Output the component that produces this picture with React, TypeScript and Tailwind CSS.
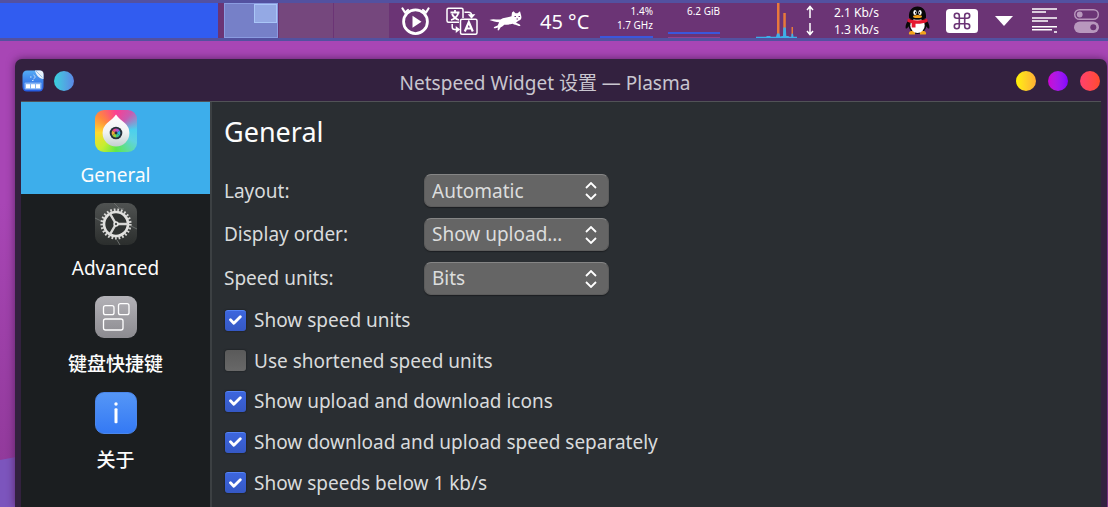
import React, { useState } from "react";

const font =
  "font-['Noto_Sans','Noto_Sans_CJK_SC',sans-serif]";

function Pager() {
  return (
    <div className="flex h-[35px] shrink-0 gap-px" aria-label="Virtual desktops">
      <button aria-label="Desktop 1" className="flex w-[54px] justify-end border border-[#8a9be0] bg-[#7680c8]">
        <span className="h-[19px] w-[23px] border border-[#a9c6f7] bg-[#94a9e4]" />
      </button>
      <button aria-label="Desktop 2" className="w-[54px] bg-[#75477d]" />
      <button aria-label="Desktop 3" className="w-[55px] bg-[#75477d]" />
    </div>
  );
}

function TimerIcon() {
  return (
    <svg width="29" height="29" viewBox="0 0 29 29" fill="none" stroke="#fff">
      <circle cx="14.5" cy="15.7" r="11.900" strokeWidth="2.800" />
      <path d="M1.500 2.500l2.500 4 3-2.500M27.500 2.500l-2.500 4-3-2.500" strokeWidth="2.200" strokeLinecap="round" strokeLinejoin="round" />
      <path d="M11.500 9.700v12l9-6z" fill="#fff" stroke="none" />
    </svg>
  );
}

function TranslateIcon() {
  return (
    <svg width="32" height="28" viewBox="0 0 32 28" fill="none" stroke="#fff" strokeWidth="1.500">
      <path d="M13 15.200H2.500a1.500 1.500 0 0 1-1.500-1.500v-11a1.500 1.500 0 0 1 1.500-1.500h13a1.500 1.500 0 0 1 1.500 1.500V11" />
      <rect x="14.500" y="12.200" width="16.500" height="15" rx="1.500" />
      <path d="M9 3v2.500M4.500 5.500h9M6 7c1.500 3 4 5 7 6M12.200 6.500C11 10 8.500 12 5 13" strokeWidth="1.800" />
      <path d="M18.800 24.500l4-9.500 4 9.500M20.200 21.500h5.200" strokeWidth="2.200" />
      <path d="M18.500 5.200h4a3 3 0 0 1 3 3V9" />
      <path d="M6.200 17v3a2.500 2.500 0 0 0 2.500 2.500h3.500" />
      <path d="M23.300 8l2.200 2.500L27.700 8zM10.500 20.500l2.500 2-2.500 2z" fill="#fff" />
    </svg>
  );
}

function CatIcon() {
  return (
    <svg width="33" height="20" viewBox="0 0 33 20">
      <path
        d="M.5 9C4 7.500 8 9 11.500 8.500c3.500-2.200 7.500-1.700 11-3.200L23 1.500 24.500.3l2 2h2L31 .3l1 3.700c1 2.700.3 5.200-2.500 5.800-1 .9-1.800 1.300-2.500 2 1.500.7 3.200.9 4.500 2.600-.5.9-1.500.8-2.300.4-1.700-.8-3.900-.9-5.500-2-3 1-6 .8-8.500 1-1.300 1.700-2.700 2-3.700 2.700-.8 1.100-1 2.700-2.200 3-1 .1-.8-1.500-.1-2.900-1.700.6-4.500 1.200-4.500.3.1-1.100 2.700-1.400 3.900-2.300.6-1.200.9-2.200 1.500-3.400C7 11 3.500 10 .5 9z"
        fill="#fff"
      />
      <path d="M25.500 5.500H27M29.500 5.500H31M27.500 8h1.500" stroke="#6b3475" strokeWidth="1" />
    </svg>
  );
}

function NetGraph() {
  return (
    <svg width="41" height="35" viewBox="0 0 41 35">
      <path d="M21 0h2.500v35H21zM27.300 10H29.800v25h-2.500zM35.500 24H37v11h-1.500z" fill="#e8793b" />
      <path
        d="M0 33.800h10l1-.9h3l1 .8h5L21 30.500h2.500l.5 3 3-.5.3-8.500h2.500l.5 8.500h2l1 .8h2l.2-3H37l.5 3H41V35H0z"
        fill="#3daee9"
      />
    </svg>
  );
}

function PenguinIcon() {
  return (
    <svg width="25" height="29" viewBox="0 0 25 29">
      <path d="M4 13C2 16 .2 19 .6 22c.4 1.500 2 0 2.900-1.500h18c.9 1.500 2.500 3 2.900 1.500.4-3-1.400-6-3.400-9z" fill="#080808" />
      <ellipse cx="12.500" cy="19" rx="9" ry="9" fill="#0b0b0b" />
      <path d="M4 27c0-2 3-2.500 6-2v3.500H5.500C4.300 28.500 3.500 28 4 27zM21 27c0-2-3-2.500-6-2v3.500h4.500c1.200 0 2-.5 1.500-1.500z" fill="#f2a31b" />
      <ellipse cx="12.500" cy="19.500" rx="7.200" ry="7.500" fill="#fff" />
      <path d="M4 11.500C3.500 4.500 7 .5 12.500.5S21.500 4.500 21 11.500c0 3-17 3-17 0z" fill="#080808" />
      <ellipse cx="10" cy="6.500" rx="1.700" ry="2.500" fill="#fff" />
      <ellipse cx="15" cy="6.500" rx="1.700" ry="2.500" fill="#fff" />
      <path d="M10.600 5.800v1.600M14.400 5.800v1.600" stroke="#000" strokeWidth="1.100" />
      <ellipse cx="12.500" cy="10.500" rx="4.500" ry="1.500" fill="#f2a31b" />
      <path d="M2.800 12.500c5.500 2.600 14 2.600 19.400 0l.4 3.300c-3.600 1.700-8 2.200-12.100 2v3.700H6.700v-4.300c-1.700-.3-3-.8-4.300-1.400z" fill="#e5182f" />
    </svg>
  );
}

function CommandIcon() {
  return (
    <svg width="32" height="24" viewBox="0 0 32 24" fill="none">
      <rect width="32" height="24" rx="3.500" fill="#fff" />
      <path
        d="M13.300 9.300h5.400v5.400h-5.400zM13.300 9.300h-2.500A2.500 2.500 0 1 1 13.300 6.800zM18.700 9.300V6.800A2.500 2.500 0 1 1 21.200 9.300zM13.300 14.700v2.500A2.500 2.500 0 1 1 10.800 14.700zM18.700 14.700h2.500a2.500 2.500 0 1 1-2.500 2.500z"
        stroke="#6b3475"
        strokeWidth="1.600"
      />
    </svg>
  );
}

function ListIcon() {
  return (
    <svg width="25" height="25" viewBox="0 0 25 25" fill="none" stroke="#fff" strokeWidth="1.500">
      <path d="M0 1h25M0 4h14M0 10h25M0 13h16M0 18.700h25M0 21.700h20M22 24h3" />
    </svg>
  );
}

function TogglesIcon() {
  return (
    <svg width="25" height="24" viewBox="0 0 25 24" fill="none">
      <rect x=".7" y=".7" width="23.600" height="9.600" rx="4.800" stroke="#b897bd" strokeWidth="1.400" />
      <circle cx="5.700" cy="5.500" r="2.900" fill="#b897bd" />
      <rect y="12.500" width="25" height="11.500" rx="5.750" fill="#b897bd" />
      <circle cx="19.300" cy="18.200" r="3" fill="#6b3475" />
    </svg>
  );
}

function Panel() {
  return (
    <header className="flex h-[41px] shrink-0 items-center overflow-hidden border-y-[3px] border-[#5351a0] bg-[#6b3475] pr-[9px] text-white">
      <div className="mr-[6px] h-[35px] min-w-0 flex-1 bg-[#315cf0]" />
      <Pager />
      <div className="ml-3 flex shrink-0 items-center">
        <TimerIcon />
      </div>
      <div className="ml-4 shrink-0">
        <TranslateIcon />
      </div>
      <div className="ml-[11px] shrink-0">
        <CatIcon />
      </div>
      <span className="ml-[18px] w-[48px] shrink-0 pt-[2px] text-[20px] leading-[35px] whitespace-nowrap">45 °C</span>
      <div className="ml-3 flex h-[35px] w-[53px] shrink-0 flex-col border-b-2 border-[#3a57dc] pt-px text-right text-[10px] leading-[14px]">
        <span>1.4%</span>
        <span>1.7 GHz</span>
      </div>
      <div className="ml-[15px] flex h-[35px] w-[52px] shrink-0 flex-col justify-between pt-px text-right text-[10px] leading-[14px]">
        <span>6.2 GiB</span>
        <span className="h-[6px] border-t-2 border-b border-t-[#3a57dc] border-b-[#93408f]" />
      </div>
      <div className="ml-9 shrink-0">
        <NetGraph />
      </div>
      <svg className="ml-[9px] shrink-0" width="8" height="31" viewBox="0 0 8 31" fill="none" stroke="#fff" strokeWidth="1.500">
        <path d="M4 13V2M1 5l3-3.500L7 5M4 18v11M1 26l3 3.500L7 26" />
      </svg>
      <div className="ml-[10px] flex w-[55px] shrink-0 flex-col text-right text-[12px] leading-[17px] whitespace-nowrap">
        <span>2.1 Kb/s</span>
        <span>1.3 Kb/s</span>
      </div>
      <div className="ml-[26px] shrink-0">
        <PenguinIcon />
      </div>
      <div className="ml-4 shrink-0">
        <CommandIcon />
      </div>
      <svg className="ml-[17px] shrink-0" width="18" height="10" viewBox="0 0 18 10">
        <path d="M0 0h18L9 10z" fill="#fff" />
      </svg>
      <div className="ml-[19px] shrink-0">
        <ListIcon />
      </div>
      <div className="ml-[17px] shrink-0">
        <TogglesIcon />
      </div>
    </header>
  );
}

function AppIcon() {
  return (
    <svg width="22" height="22" viewBox="0 0 22 22">
      <defs>
        <linearGradient id="app" x1="0" y1="0" x2="0" y2="1">
          <stop offset="0" stopColor="#55acf5" />
          <stop offset="1" stopColor="#2459e0" />
        </linearGradient>
      </defs>
      <rect x=".5" y=".5" width="21" height="21" rx="4.500" fill="url(#app)" />
      <path d="M13 .5h5a3.500 3.500 0 0 1 3.500 3.500v5c-4-.5-7.500-3.500-8.500-8.500z" fill="#e8f1fb" />
      <path d="M14 1l6.500 6.500" stroke="#8bb6e0" strokeWidth=".8" />
      <path d="M11.500 5c2 .8 2 3 0 4M8 7h1.500M10 10.500h1.500" stroke="#c6e2fb" strokeWidth="1" fill="none" />
      <rect x="2.500" y="12.500" width="17" height="7" rx="1" fill="#86b4f3" />
      <path d="M4 14.200h4v4H4zM9 14.200h4v4H9zM14 14.200h4v4h-4z" fill="#fff" />
    </svg>
  );
}

function GeneralIcon() {
  return (
    <div className="flex size-[42px] items-center justify-center rounded-[9px] bg-[conic-gradient(#fb3f92,#c85bb0_40deg,#4ad0ee_85deg,#5fd3e0_120deg,#5fe84a_180deg,#c5ee30_220deg,#ffd92f_265deg,#ff8a3c_310deg,#fb3f92)]">
      <svg width="42" height="42" viewBox="0 0 42 42">
        <defs>
          <linearGradient id="drop" x1="0" y1="0" x2="0" y2="1">
            <stop offset="0" stopColor="#fff" />
            <stop offset=".55" stopColor="#f1f3f3" />
            <stop offset="1" stopColor="#c3cfd0" />
          </linearGradient>
        </defs>
        <path d="M21 4.500c2 3.300 5.500 5.700 9 8.700a13.400 13.400 0 1 1-18 0c3.500-3 7-5.400 9-8.700z" fill="url(#drop)" />
        <circle cx="21" cy="23" r="6.300" fill="#27323c" />
        <path d="M21 23l-3.800-2.200A4.400 4.400 0 0 1 21 18.600z" fill="#e94b8e" />
        <path d="M21 23v-4.400a4.400 4.400 0 0 1 3.800 2.200z" fill="#a75bd0" />
        <path d="M21 23l3.800-2.200a4.400 4.400 0 0 1 0 4.400z" fill="#31b6df" />
        <path d="M21 23l3.800 2.200a4.400 4.400 0 0 1-3.800 2.200z" fill="#3fc48a" />
        <path d="M21 23v4.400a4.400 4.400 0 0 1-3.800-2.200z" fill="#9ccf35" />
        <path d="M21 23l-3.800 2.200a4.400 4.400 0 0 1 0-4.400z" fill="#eea93a" />
        <circle cx="21" cy="23" r="1.400" fill="#27323c" />
      </svg>
    </div>
  );
}

function AdvancedIcon() {
  return (
    <div className="size-[42px] rounded-[9px] bg-linear-to-b from-[#505352] to-[#2b2e2d]">
      <svg width="42" height="42" viewBox="0 0 42 42" fill="none">
        <path d="M19 0l5 5 5 1M0 15l6 3M36 23l6 3M22 37l3 5" stroke="#6a6d6c" strokeWidth="1" />
        <circle cx="21" cy="21" r="11" fill="#2f3231" />
        <circle cx="21" cy="21" r="14.300" stroke="#d6d6d4" strokeWidth="2.600" strokeDasharray="1.700 1.895" />
        <circle cx="21" cy="21" r="12" stroke="#e0e0de" strokeWidth="2.600" />
        <path d="M21 21h12M21 21l-6-10.400M21 21l-6 10.400" stroke="#d6d6d4" strokeWidth="2.400" />
        <circle cx="21" cy="21" r="2.700" fill="#e8e8e6" />
        <circle cx="21" cy="21" r="1.200" fill="#4a4d4c" />
      </svg>
    </div>
  );
}

function ShortcutsIcon() {
  return (
    <div className="size-[42px] rounded-[9px] bg-linear-to-b from-[#b3b2b7] to-[#8c8b90]">
      <svg width="42" height="42" viewBox="0 0 42 42" fill="none" stroke="#fff" strokeWidth="1.300">
        <rect x="8.500" y="9.700" width="10.500" height="9" rx="2" />
        <rect x="23.500" y="7.700" width="10.500" height="11" rx="2" />
        <rect x="8.500" y="23" width="19.500" height="11" rx="2" />
      </svg>
    </div>
  );
}

function InfoIcon() {
  return (
    <div className="size-[42px] rounded-[9px] border border-[#4a86ea] bg-linear-to-b from-[#5596f6] to-[#3479f4]">
      <svg width="40" height="40" viewBox="0 0 40 40">
        <circle cx="20" cy="11" r="1.700" fill="#fff" />
        <rect x="18.500" y="15.300" width="3" height="15" rx="1" fill="#fff" />
      </svg>
    </div>
  );
}

const pages = [
  { label: "General", icon: GeneralIcon, cjk: false },
  { label: "Advanced", icon: AdvancedIcon, cjk: false },
  { label: "键盘快捷键", icon: ShortcutsIcon, cjk: true },
  { label: "关于", icon: InfoIcon, cjk: true },
];

function Sidebar() {
  const [active, setActive] = useState("General");
  return (
    <nav className="flex w-[191px] shrink-0 flex-col gap-px border-r-2 border-[#3c4043] bg-[#1b1e20]">
      {pages.map(({ label, icon: Icon, cjk }) => (
        <button
          key={label}
          onClick={() => setActive(label)}
          className={
            "flex flex-col items-center gap-2 pt-2 text-[19px] text-[#fcfcfc] " +
            (cjk ? "leading-[37px] font-medium " : "pb-1 leading-[30px] ") +
            (active === label ? "bg-[#3daeeb]" : "")
          }
        >
          <Icon />
          <span>{label}</span>
        </button>
      ))}
    </nav>
  );
}

function SelectRow({ id, label, options }: { id: string; label: string; options: string[] }) {
  return (
    <div className="flex items-center">
      <label htmlFor={id} className="w-[200px] shrink-0">
        {label}
      </label>
      <div className="relative">
        <select
          id={id}
          className="block h-[33px] w-[185px] appearance-none rounded-[7px] border border-[#5c5c5c] border-t-[#858585] bg-[#656565] pr-8 pl-[7px] text-[19px] leading-[28px] text-[#dcdddd] shadow-[0_1px_1px_#1c1f22]"
        >
          {options.map((o) => (
            <option key={o}>{o}</option>
          ))}
        </select>
        <svg
          className="pointer-events-none absolute top-2 right-3"
          width="12"
          height="18"
          viewBox="0 0 12 18"
          fill="none"
          stroke="#fff"
          strokeWidth="1.800"
        >
          <path d="M1 6l5-5 5 5M1 12l5 5 5-5" />
        </svg>
      </div>
    </div>
  );
}

function CheckRow({ label, initial }: { label: string; initial: boolean }) {
  const [on, setOn] = useState(initial);
  return (
    <label className="flex items-center gap-2">
      <span className="grid shrink-0">
        <input
          type="checkbox"
          checked={on}
          onChange={() => setOn(!on)}
          className="col-start-1 row-start-1 size-[21px] appearance-none rounded-[3px] bg-linear-to-b from-[#5a5a5a] to-[#686868] shadow-[0_0_1px_1px_#23272a] checked:border-t checked:border-[#5684f5] checked:from-[#3d66dd] checked:to-[#3558c4]"
        />
        {on && (
          <svg
            className="pointer-events-none col-start-1 row-start-1 place-self-center"
            width="13"
            height="10"
            viewBox="0 0 13 10"
            fill="none"
            stroke="#fff"
            strokeWidth="2.800"
            strokeLinecap="round"
            strokeLinejoin="round"
          >
            <path d="M1.500 4.800l3.300 3.500 6.500-6.500" />
          </svg>
        )}
      </span>
      <span>{label}</span>
    </label>
  );
}

function Settings() {
  return (
    <main className="min-w-0 flex-1 px-3 text-[19px] leading-[28px] text-[#d9dbdc]">
      <h1 className="pt-[10px] pb-[17px] text-[27px] leading-[40px] text-[#fcfcfc]">General</h1>
      <div className="grid h-[131px] grid-rows-3">
        <SelectRow id="layout" label="Layout:" options={["Automatic"]} />
        <SelectRow id="order" label="Display order:" options={["Show upload…"]} />
        <SelectRow id="units" label="Speed units:" options={["Bits"]} />
      </div>
      <div className="grid h-[203px] grid-rows-5 pl-px">
        <CheckRow label="Show speed units" initial={true} />
        <CheckRow label="Use shortened speed units" initial={false} />
        <CheckRow label="Show upload and download icons" initial={true} />
        <CheckRow label="Show download and upload speed separately" initial={true} />
        <CheckRow label="Show speeds below 1 kb/s" initial={true} />
      </div>
    </main>
  );
}

export default function App() {
  return (
    <div className={"flex h-screen flex-col overflow-hidden bg-linear-to-b from-[#a846b5] from-40% to-[#8e3897] " + font}>
      <Panel />
      <div className="relative flex min-h-0 flex-1 pt-[18px] pr-px pl-[15px]">
        <svg className="absolute bottom-0 left-0" width="16" height="50" viewBox="0 0 16 50">
          <path d="M0 3l16-3v50H0z" fill="#7c55bd" />
        </svg>
        <section className="relative flex min-w-0 flex-1 flex-col rounded-t-[7px] bg-[#33213f] px-[6px] shadow-[0_0_8px_#5a2363]">
          <div className="flex h-[42px] shrink-0 items-center pt-[2px]">
            <div className="flex w-[58px] items-center gap-[10px] pl-px">
              <AppIcon />
              <button aria-label="Pin" className="size-5 rounded-full bg-linear-to-r from-[#36d1dc] to-[#5b86e5]" />
            </div>
            <h2 className="flex-1 pt-[3px] text-center text-[19px] leading-[28px] text-[#c9c6cf]">
              Netspeed Widget 设置 — Plasma
            </h2>
            <div className="flex w-[90px] items-center justify-end gap-3 pr-px">
              <button aria-label="Minimize" className="size-5 rounded-full bg-linear-to-r from-[#fff200] to-[#ffad33]" />
              <button aria-label="Maximize" className="size-5 rounded-full bg-linear-to-r from-[#cc00d4] to-[#8200ff]" />
              <button aria-label="Close" className="size-5 rounded-full bg-linear-to-r from-[#ff416c] to-[#ff4b2b]" />
            </div>
          </div>
          <div className="flex min-h-0 flex-1 overflow-hidden border-t border-[#515257] bg-[#2a2e32]">
            <Sidebar />
            <Settings />
          </div>
        </section>
      </div>
    </div>
  );
}
